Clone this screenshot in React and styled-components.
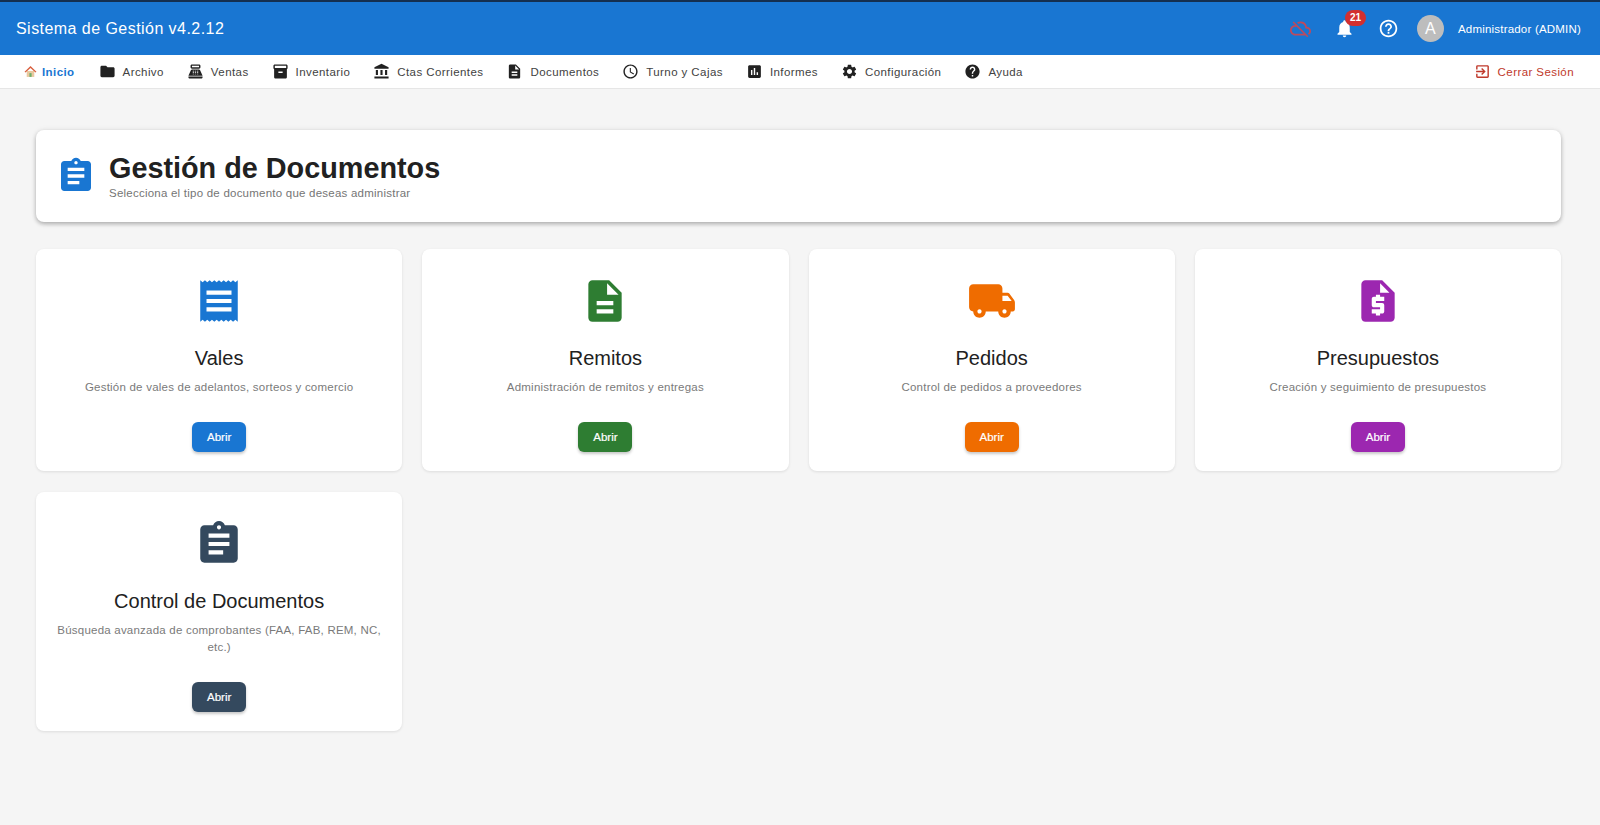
import React from 'react'
import styled, { createGlobalStyle } from 'styled-components'
import {
  MdFolder, MdPointOfSale, MdInventory2, MdAccountBalance, MdDescription, MdAccessTime,
  MdAssessment, MdSettings, MdHelp, MdExitToApp, MdCloudOff, MdNotifications, MdHelpOutline,
  MdRequestQuote, MdAssignment,
} from 'react-icons/md'

const GlobalStyle = createGlobalStyle`
  html, body { margin: 0; padding: 0; background: #f5f5f5; }
  body { font-family: "Liberation Sans", Arial, sans-serif; color: #212121; }
  * { box-sizing: border-box; }
`

const Page = styled.div`
  min-height: 825px;
  background: #f5f5f5;
`
const AppBar = styled.header`
  height: 55px;
  background: #1976d2;
  border-top: 2px solid #142f50;
  display: flex;
  align-items: center;
  padding: 0 19px 0 16px;
  color: #fff;
`
const AppTitle = styled.div`
  font-size: 16px;
  letter-spacing: 0.45px;
  flex: 1;
`
const AppActions = styled.div`
  display: flex;
  align-items: center;
  color: #fff;
`
const ActionIcon = styled.span`
  position: relative;
  display: flex;
  width: 22px;
  justify-content: center;
  margin-right: ${(p) => p.$gap}px;
  color: ${(p) => p.$color || '#fff'};
`
const Badge = styled.span`
  position: absolute;
  top: -8px;
  left: 11px;
  height: 16px;
  min-width: 21px;
  border-radius: 8px;
  background: #d32f2f;
  color: #fff;
  font-size: 10px;
  font-weight: 700;
  line-height: 16px;
  text-align: center;
`
const Avatar = styled.div`
  width: 27px;
  height: 27px;
  border-radius: 50%;
  background: #bdbdbd;
  color: #fff;
  font-size: 16px;
  display: flex;
  align-items: center;
  justify-content: center;
  margin-right: 14px;
`
const UserName = styled.span`
  font-size: 11.5px;
  letter-spacing: 0.2px;
`
const NavBar = styled.nav`
  height: 34px;
  background: #fff;
  border-bottom: 1px solid #e6e6e6;
  display: flex;
  align-items: center;
  padding: 0 26px 0 24px;
`
const NavItem = styled.a`
  display: flex;
  align-items: center;
  gap: ${(p) => p.$gap || 7}px;
  margin-right: ${(p) => p.$after ?? 23}px;
  font-size: 11.5px;
  letter-spacing: 0.42px;
  white-space: nowrap;
  color: ${(p) => p.$color || '#424242'};
  font-weight: ${(p) => p.$bold ? 700 : 400};
  svg { flex: none; color: ${(p) => p.$iconColor || '#212121'}; }
`
const Spacer = styled.div`
  flex: 1;
`
const Main = styled.main`
  padding: 41px 39px 0 36px;
`
const HeaderCard = styled.section`
  height: 92px;
  background: #fff;
  border-radius: 8px;
  box-shadow: 0 2px 4px rgba(0,0,0,.28), 0 0 6px rgba(0,0,0,.06);
  display: flex;
  align-items: center;
  padding-left: 20px;
  gap: 13px;
  color: #1976d2;
  margin-bottom: 27px;
`
const HeaderTitle = styled.h1`
  margin: 0 0 2px;
  font-size: 28.8px;
  line-height: 33px;
  font-weight: 700;
  color: #212121;
`
const HeaderSub = styled.p`
  margin: 0;
  font-size: 11.5px;
  line-height: 13px;
  letter-spacing: 0.23px;
  color: #757575;
`
const Grid = styled.div`
  display: grid;
  grid-template-columns: repeat(4, 1fr);
  gap: 21px 20px;
  align-items: start;
`
const Card = styled.article`
  background: #fff;
  border-radius: 8px;
  box-shadow: 0 1px 3px rgba(0,0,0,.1);
  padding: 27px 16px 19px;
  display: flex;
  flex-direction: column;
  align-items: center;
  text-align: center;
  color: ${(p) => p.$color};
`
const CardTitle = styled.h2`
  margin: 19px 0 0;
  font-size: 20px;
  line-height: 26px;
  font-weight: 400;
  color: #212121;
`
const CardText = styled.p`
  margin: 8px 0 0;
  font-size: 11.5px;
  line-height: 17px;
  letter-spacing: 0.22px;
  color: #7a7a7a;
`
const OpenButton = styled.button`
  margin-top: 26px;
  width: 54px;
  height: 30px;
  border: 0;
  border-radius: 6px;
  background: ${(p) => p.$color};
  color: #fff;
  font-family: inherit;
  font-size: 11.5px;
  -webkit-text-stroke: 0.2px #fff;
  box-shadow: 0 2px 3px rgba(0,0,0,.22);
`

function HomeEmoji() {
  return (
    <svg width="13" height="13" viewBox="0 0 24 24">
      <path d="M5 11h14v11H5z" fill="#e8c9a0" />
      <path d="M10 15h4v7h-4z" fill="#6fae6a" />
      <path d="M12 2 1 12.5l1.8 1.5L12 5.5l9.2 8.5 1.8-1.5z" fill="#d9603f" />
    </svg>
  )
}

// 8 dientes, el de material trae solo 6
const teeth = (dir, dy) => Array.from({ length: 8 }, () => `l${dir * 1.125} ${dy}l${dir * 1.125} ${-dy}`).join('')

function ReceiptIcon({ size }) {
  return (
    <svg width={size} height={size} viewBox="0 0 24 24" fill="currentColor">
      <path
        fillRule="evenodd"
        d={`M3 2${teeth(1, 1)}V22${teeth(-1, -1)}Z M6 7h12v2H6z M6 11h12v2H6z M6 15h12v2H6z`}
      />
    </svg>
  )
}

function TruckIcon({ size }) {
  return (
    <svg width={size} height={size} viewBox="0 0 24 24" fill="currentColor">
      <path d="M19.5 8H17V6c0-1.1-.9-2-2-2H3c-1.1 0-2 .9-2 2v9c0 1.1.9 2 2 2 0 1.66 1.34 3 3 3s3-1.34 3-3h6c0 1.66 1.34 3 3 3s3-1.34 3-3h1c.55 0 1-.45 1-1v-3.33c0-.43-.14-.85-.4-1.2L20.3 8.4c-.19-.25-.49-.4-.8-.4zM6 18c-.55 0-1-.45-1-1s.45-1 1-1 1 .45 1 1-.45 1-1 1zm13.5-8.5l1.96 2.5H17V9.5h2.5zM18 18c-.55 0-1-.45-1-1s.45-1 1-1 1 .45 1 1-.45 1-1 1z" />
    </svg>
  )
}

const navItems = [
  ['Archivo', MdFolder],
  ['Ventas', MdPointOfSale],
  ['Inventario', MdInventory2],
  ['Ctas Corrientes', MdAccountBalance],
  ['Documentos', MdDescription],
  ['Turno y Cajas', MdAccessTime],
  ['Informes', MdAssessment],
  ['Configuración', MdSettings],
  ['Ayuda', MdHelp],
]

const cards = [
  { title: 'Vales', text: 'Gestión de vales de adelantos, sorteos y comercio', color: '#1976d2', Icon: ReceiptIcon },
  { title: 'Remitos', text: 'Administración de remitos y entregas', color: '#2e7d32', Icon: MdDescription },
  { title: 'Pedidos', text: 'Control de pedidos a proveedores', color: '#ef6c00', Icon: TruckIcon },
  { title: 'Presupuestos', text: 'Creación y seguimiento de presupuestos', color: '#9c27b0', Icon: MdRequestQuote },
  { title: 'Control de Documentos', text: 'Búsqueda avanzada de comprobantes (FAA, FAB, REM, NC, etc.)', color: '#34495e', Icon: MdAssignment },
]

export default function App() {
  return (
    <Page>
      <GlobalStyle />
      <AppBar>
        <AppTitle>Sistema de Gestión v4.2.12</AppTitle>
        <AppActions>
          <ActionIcon $gap={22} $color="#bf4a5c"><MdCloudOff size={21} /></ActionIcon>
          <ActionIcon $gap={22}>
            <MdNotifications size={21} />
            <Badge>21</Badge>
          </ActionIcon>
          <ActionIcon $gap={17}><MdHelpOutline size={21} /></ActionIcon>
          <Avatar>A</Avatar>
          <UserName>Administrador (ADMIN)</UserName>
        </AppActions>
      </AppBar>
      <NavBar>
        <NavItem $color="#1976d2" $bold $gap={5} $after={24}><HomeEmoji />Inicio</NavItem>
        {navItems.map(([label, Icon]) => (
          <NavItem key={label}><Icon size={17} />{label}</NavItem>
        ))}
        <Spacer />
        <NavItem $color="#c0392b" $iconColor="#c0392b" $after={0}>
          <MdExitToApp size={17} />Cerrar Sesión
        </NavItem>
      </NavBar>
      <Main>
        <HeaderCard>
          <MdAssignment size={40} />
          <div>
            <HeaderTitle>Gestión de Documentos</HeaderTitle>
            <HeaderSub>Selecciona el tipo de documento que deseas administrar</HeaderSub>
          </div>
        </HeaderCard>
        <Grid>
          {cards.map(({ title, text, color, Icon }) => (
            <Card key={title} $color={color}>
              <Icon size={50} />
              <CardTitle>{title}</CardTitle>
              <CardText>{text}</CardText>
              <OpenButton $color={color}>Abrir</OpenButton>
            </Card>
          ))}
        </Grid>
      </Main>
    </Page>
  )
}
